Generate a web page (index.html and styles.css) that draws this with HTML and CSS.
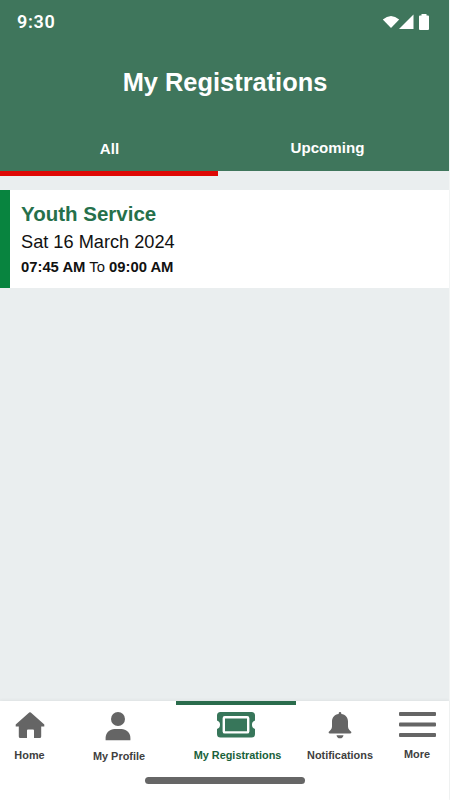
FILE: index.html
```
<!DOCTYPE html>
<html lang="en">

<head>
    <meta charset="utf-8">
    <title>My Registrations</title>
    <link rel="stylesheet" href="styles.css">
</head>

<body>
    <div class="app">
        <header class="header">
            <div class="status">
                <span class="time">9:30</span>
                <svg class="status-icons" width="48" height="18" viewBox="0 0 48 18">
                    <path d="M0.800 6.500Q9-.5 17.200 6.500L9 15Z" />
                    <path d="M17 16H31.500V1.500Z" />
                    <path d="M39.500 2.500V1H44.500V2.500H46Q47 2.500 47 3.500V16Q47 17 46 17H38Q37 17 37 16V3.500Q37 2.500 38 2.500Z" />
                </svg>
            </div>
            <h1 class="title">My Registrations</h1>
            <nav class="tabs">
                <a class="tab active">All</a>
                <a class="tab">Upcoming</a>
            </nav>
        </header>

        <main class="list">
            <article class="card">
                <h2 class="card-title">Youth Service</h2>
                <p class="card-date">Sat 16 March 2024</p>
                <p class="card-time"><b>07:45 AM</b> To <b>09:00 AM</b></p>
            </article>
        </main>

        <footer class="footer">
            <nav class="navbar">
                <a class="nav-item home">
                    <svg class="icon" width="30" height="28" viewBox="0 0 30 28">
                        <path d="M14.200.5Q15 0 15.800.5L29.300 12.500V14.500H26.200V24.500Q26.200 26 24.700 26H19V18.500Q19 17.500 18 17.500H13Q12 17.500 12 18.500V26H5.300Q3.800 26 3.800 24.500V14.500H.7V12.500Z" />
                    </svg>
                    <span class="label">Home</span>
                </a>
                <a class="nav-item profile">
                    <svg class="icon" width="26" height="30" viewBox="0 0 26 30">
                        <circle cx="13" cy="7" r="7" />
                        <path d="M.6 28.200V26C.6 20.500 5 17 9.500 17H16.500C21 17 25.400 20.500 25.400 26V28.200Z" />
                    </svg>
                    <span class="label">My Profile</span>
                </a>
                <a class="nav-item registrations current">
                    <svg class="icon" width="38" height="26" viewBox="0 0 38 26">
                        <path d="M3.500 0H34.500Q38 0 38 3.500V8.500A4.500 4.500 0 0 0 38 17V22Q38 25.500 34.500 25.500H3.500Q0 25.500 0 22V17A4.500 4.500 0 0 0 0 8.500V3.500Q0 0 3.500 0Z" />
                        <rect class="ticket-line" x="6.800" y="5.200" width="24.400" height="15.200" rx="1" />
                    </svg>
                    <span class="label">My Registrations</span>
                </a>
                <a class="nav-item notifications">
                    <svg class="icon" width="24" height="27" viewBox="0 0 24 27">
                        <path d="M10.700 2V1.300A1.300 1.300 0 0 1 13.300 1.300V2C17.500 2.500 20 5.700 20 9.500V14.500C20 17 21.700 18.500 23.200 19.700Q24 21.500 22.200 21.500H1.800Q0 21.500.8 19.700C2.300 18.500 4 17 4 14.500V9.500C4 5.700 6.500 2.500 10.700 2Z" />
                        <path d="M8.500 23.200H15.500Q15 26.300 12 26.300T8.500 23.200Z" />
                    </svg>
                    <span class="label">Notifications</span>
                </a>
                <a class="nav-item more">
                    <svg class="icon" width="37" height="26" viewBox="0 0 37 26">
                        <rect width="37" height="4" rx="1" />
                        <rect y="10.500" width="37" height="4" rx="1" />
                        <rect y="21" width="37" height="4" rx="1" />
                    </svg>
                    <span class="label">More</span>
                </a>
            </nav>
            <div class="home-bar"></div>
        </footer>
    </div>
</body>

</html>
```
FILE: styles.css
```
* {
    box-sizing: border-box;
}
body {
    margin: 0;
    background: #f3f5f5;
    font-family: "Liberation Sans", Arial, sans-serif;
}
h1, h2, p {
    margin: 0;
}
.app {
    display: flex;
    flex-direction: column;
    width: 449px;
    height: 800px;
    background: #eaeeef;
}
.header {
    height: 171px;
    background: #3f765c;
    color: #fff;
}
.status {
    display: flex;
    justify-content: space-between;
    height: 44px;
    padding: 13px 19px 0 17px;
}
.time {
    font: 600 18px/18px Roboto, sans-serif;
    letter-spacing: 0.7px;
}
.status-icons {
    fill: #fff;
}
.title {
    height: 82px;
    padding-top: 23px;
    padding-left: 1px;
    font-size: 25.4px;
    line-height: 30px;
    text-align: center;
}

/* tabs, the marker hangs just under the header */
.tabs {
    display: grid;
    grid-template-columns: 218px 1fr;
    height: 50px;
}
.tab {
    padding-top: 12px;
    font-size: 15.1px;
    font-weight: bold;
    line-height: 20px;
    text-align: center;
    padding-right: 12px;
}
.tab.active {
    padding-top: 13px;
    padding-right: 0;
    padding-left: 1px;
    border-bottom: 5px solid #de0805;
}

.list {
    flex: 1;
    padding-top: 19px;
}
.card {
    height: 98px;
    padding: 11px 11px;
    border-left: 10px solid #08843f;
    background: #fff;
    color: #111;
}
.card-title {
    color: #26704b;
    font-size: 20.5px;
    line-height: 26px;
}
.card-date {
    padding-top: 1px;
    font-size: 18.2px;
    line-height: 28px;
}
.card-time {
    font-size: 14.8px;
    line-height: 22px;
}

.footer {
    height: 99px;
    background: #fff;
    box-shadow: 0 -1px 3px rgba(0, 0, 0, 0.05);
}
.navbar {
    display: grid;
    grid-template-columns: 59px 117px 120px 88px 66px;
    height: 76px;
}
.nav-item {
    display: flex;
    flex-direction: column;
    align-items: center;
    padding-top: 11px;
    color: #404040;
}
.icon {
    fill: #656565;
}
.label {
    margin-top: auto;
    margin-bottom: 15px;
    font-size: 10.9px;
    font-weight: bold;
    line-height: 14px;
    white-space: nowrap;
}
.profile .label {
    margin-bottom: 14px;
    padding-left: 3px;
}
.more .label {
    margin-bottom: 16px;
}
.current {
    padding-top: 7px;
    border-top: 4px solid #2a6c4c;
    color: #19613a;
}
.current .label {
    padding-left: 3px;
}
.current .icon {
    fill: #37765a;
}
.ticket-line {
    fill: none;
    stroke: #fff;
    stroke-width: 2.4;
}
.home-bar {
    width: 160px;
    height: 7px;
    margin-left: 145px;
    border-radius: 4px;
    background: #666;
}
```
